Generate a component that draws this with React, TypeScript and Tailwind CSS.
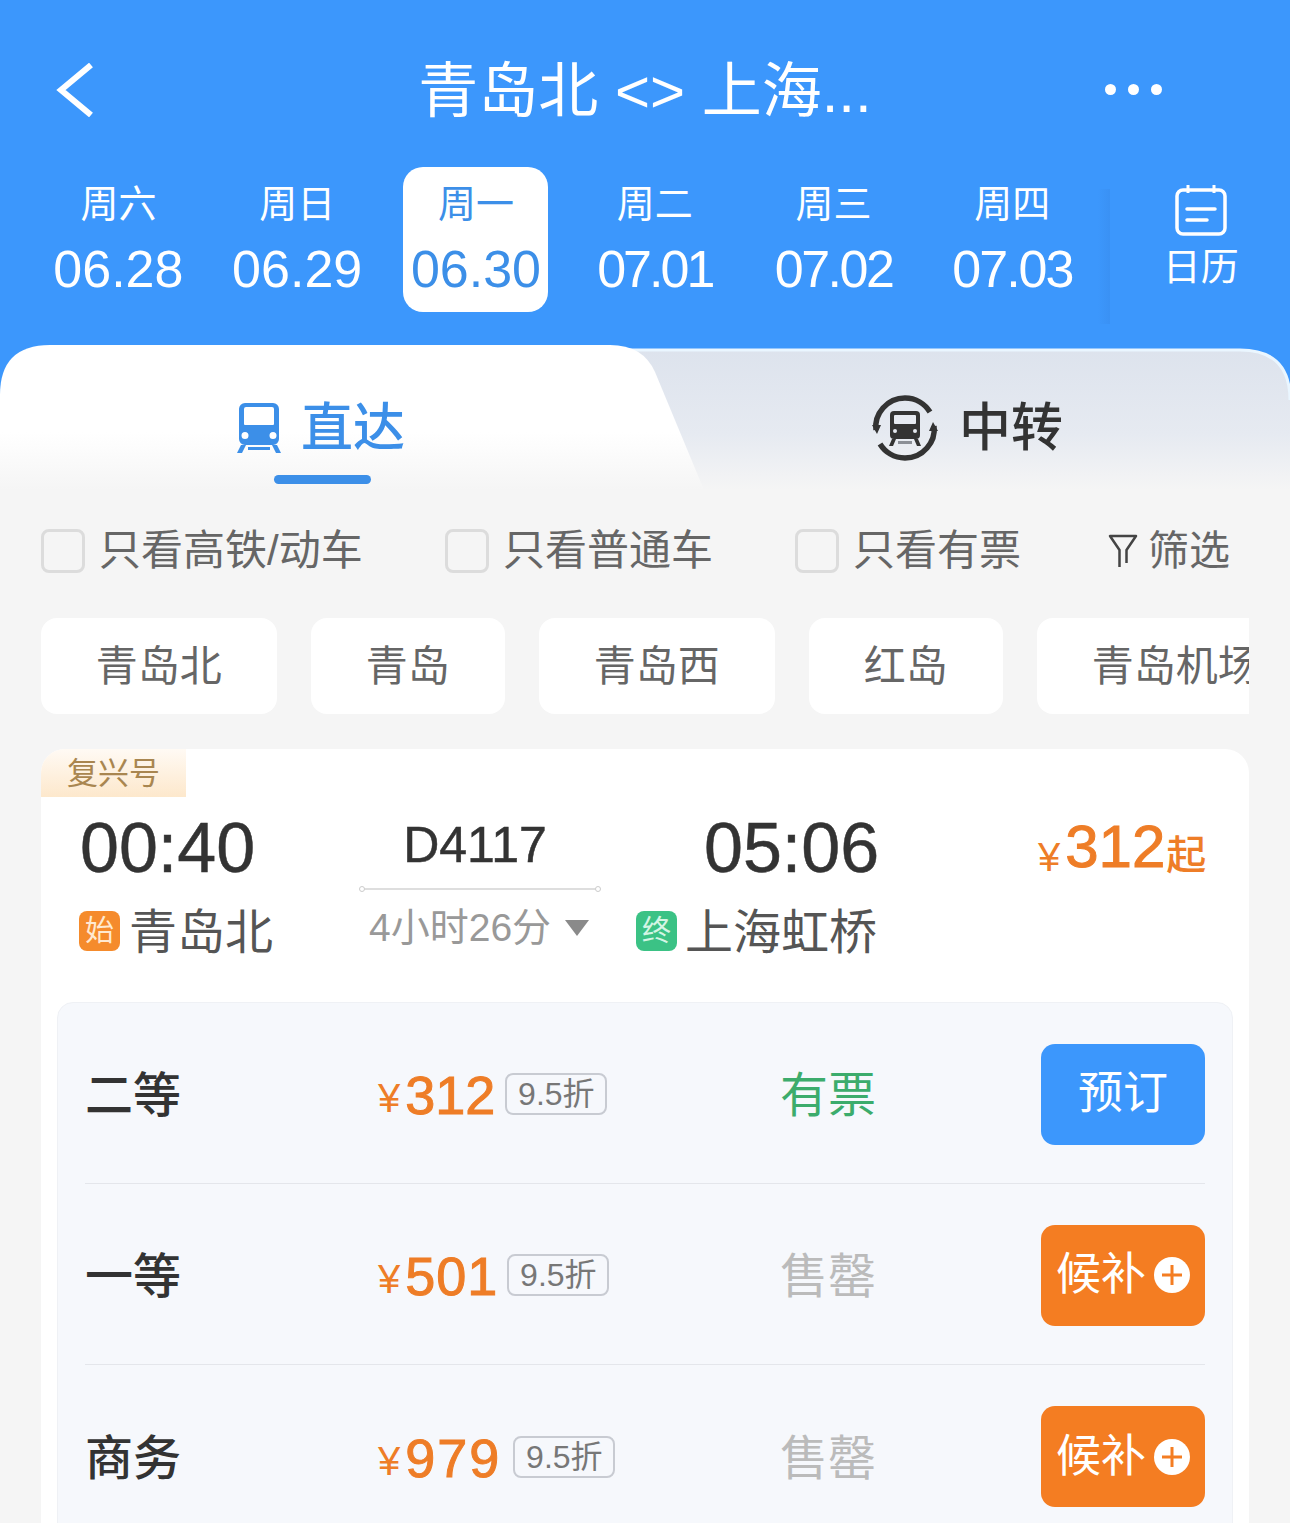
const days = [
  { week: "周六", date: "06.28", track: "" },
  { week: "周日", date: "06.29", track: "" },
  { week: "周一", date: "06.30", track: "", active: true },
  { week: "周二", date: "07.01", track: "tracking-[-3px]" },
  { week: "周三", date: "07.02", track: "tracking-[-2.5px]" },
  { week: "周四", date: "07.03", track: "tracking-[-2px]" },
];

const stations = ["青岛北", "青岛", "青岛西", "红岛", "青岛机场"];

const seats = [
  { name: "二等", price: "312", track: "", tagGap: "ml-[10px]", status: "有票", open: true },
  { name: "一等", price: "501", track: "tracking-[1px]", tagGap: "ml-[9px]", status: "售罄", open: false },
  { name: "商务", price: "979", track: "tracking-[2px]", tagGap: "ml-[12px]", status: "售罄", open: false },
];

function BackIcon() {
  return (
    <svg viewBox="0 0 40 54" className="absolute left-[55px] top-[63px] h-[54px] w-[40px] text-white" fill="none" stroke="currentColor" strokeWidth="6">
      <path d="M36 2 6 27l30 25" />
    </svg>
  );
}

function TrainIcon({ className }: { className?: string }) {
  return (
    <svg viewBox="0 0 46 50" className={className} fill="currentColor">
      <path
        fillRule="evenodd"
        d="M9 0h28a6 6 0 0 1 6 6v30a6 6 0 0 1-6 6H9a6 6 0 0 1-6-6V6a6 6 0 0 1 6-6Zm-1 6v15a1 1 0 0 0 1 1h28a1 1 0 0 0 1-1V6a2 2 0 0 0-2-2H10a2 2 0 0 0-2 2Zm1 23a3.5 3.5 0 1 0 0 7 3.5 3.5 0 0 0 0-7Zm28 0a3.5 3.5 0 1 0 0 7 3.5 3.5 0 0 0 0-7Z"
      />
      <path d="M5 42h5l-4 8H1Zm31 0h5l4 8h-5ZM12 44h22v3H12Z" />
    </svg>
  );
}

function TransferIcon({ className }: { className?: string }) {
  return (
    <svg viewBox="0 0 68 68" className={className} fill="none">
      <path d="M5 36C3 20 16 4 34 4c11 0 20 6 25 14" stroke="currentColor" strokeWidth="5.5" />
      <path d="M63 32c2 16-11 32-29 32-11 0-20-6-25-14" stroke="currentColor" strokeWidth="5.5" />
      <path d="M1 31h9l-4 9ZM67 37h-9l4-9Z" fill="currentColor" />
      <rect x="19" y="17" width="30" height="28" rx="4" fill="currentColor" />
      <rect x="23" y="21" width="22" height="9" rx="1" fill="#e6eaf1" />
      <circle cx="24" cy="37" r="2" fill="#e6eaf1" />
      <circle cx="44" cy="37" r="2" fill="#e6eaf1" />
      <path d="M21 45h4l-3 7h-4ZM43 45h4l3 7h-4Z" fill="currentColor" />
      <rect x="27" y="47" width="14" height="3" fill="#8b8f96" />
    </svg>
  );
}

function CalendarIcon() {
  return (
    <svg viewBox="0 0 52 52" className="h-[52px] w-[52px] text-white" fill="none" stroke="currentColor">
      <rect x="2" y="6" width="48" height="44" rx="6" strokeWidth="3.5" />
      <path d="M13 1v8M39 1v8" strokeWidth="3" />
      <path d="M12 25h28M12 36h20" strokeWidth="3.5" strokeLinecap="round" />
    </svg>
  );
}

function FilterIcon() {
  return (
    <svg viewBox="0 0 30 36" className="h-[36px] w-[30px] text-[#444]" fill="none" stroke="currentColor" strokeWidth="2.5">
      <path d="M11.5 34V17L2 3h26L18.5 17v13" strokeLinejoin="round" />
    </svg>
  );
}

function PlusBadge() {
  return (
    <svg viewBox="0 0 36 36" className="h-[36px] w-[36px]">
      <circle cx="18" cy="18" r="18" fill="#fff" />
      <path d="M18 8v20M8 18h20" stroke="#f47d22" strokeWidth="3" />
    </svg>
  );
}

// back panel of the two tabs: blue corners show around both shapes
function TabShapes() {
  return (
    <svg viewBox="0 0 1290 145" className="absolute inset-0 h-[145px] w-[1290px]">
      <defs>
        <linearGradient id="sideTab" x1="0" y1="0" x2="0" y2="1">
          <stop offset="0" stopColor="#dde3ed" />
          <stop offset="0.6" stopColor="#e6eaf1" />
          <stop offset="1" stopColor="#f5f5f5" />
        </linearGradient>
        <linearGradient id="mainTab" x1="0" y1="0" x2="0" y2="1">
          <stop offset="0" stopColor="#ffffff" />
          <stop offset="0.6" stopColor="#ffffff" />
          <stop offset="1" stopColor="#f5f5f5" />
        </linearGradient>
      </defs>
      <path d="M600 5H1240Q1290 5 1290 55V145H600Z" fill="url(#sideTab)" />
      <path d="M600 5H1240Q1290 5 1290 55" fill="none" stroke="#eaf6ff" strokeWidth="3" />
      <path d="M0 50Q0 0 50 0H610Q643 0 655 27L704 145H0Z" fill="url(#mainTab)" />
    </svg>
  );
}

function Check({ label, width }: { label: string; width: string }) {
  return (
    <div className={`flex items-center gap-[14px] ${width}`}>
      <span className="h-[44px] w-[44px] shrink-0 rounded-lg border-[3px] border-[#dcdcdc]" />
      <span className="whitespace-nowrap text-[42px] leading-none text-[#666]">{label}</span>
    </div>
  );
}

function SeatRow({ seat, last }: { seat: (typeof seats)[number]; last: boolean }) {
  return (
    <div className={`flex h-[181px] items-center pt-[2px] ${last ? "" : "border-b border-[#e4e6eb]"}`}>
      <div className="mt-[4px] w-[293px] text-[48px] font-medium text-[#333]">{seat.name}</div>
      <div className="flex w-[404px] items-center">
        <span className="mt-[8px] text-[40px] leading-none text-[#ee7d27]">¥</span>
        <span className={`mt-[2px] ml-[5px] text-[54px] leading-none text-[#ee7d27] [-webkit-text-stroke:1px_#ee7d27] ${seat.track}`}>{seat.price}</span>
        <span className={`${seat.tagGap} flex h-[42px] w-[102px] items-center justify-center rounded-lg border-2 border-[#c8cbd2] text-[32px] leading-none text-[#777]`}>
          9.5折
        </span>
      </div>
      <div className={`-ml-[2px] mt-[4px] w-[261px] text-[48px] ${seat.open ? "text-[#3cac6c]" : "text-[#bbbbbb]"}`}>{seat.status}</div>
      {seat.open ? (
        <button className="flex h-[101px] w-[164px] items-center justify-center rounded-[14px] bg-[#3c97fc] text-[45px] text-white">
          预订
        </button>
      ) : (
        <button className="flex h-[101px] w-[164px] items-center justify-center gap-[8px] rounded-[14px] bg-[#f47d22] text-[45px] text-white">
          候补
          <PlusBadge />
        </button>
      )}
    </div>
  );
}

export default function App() {
  return (
    <div className="h-[1523px] w-[1290px] overflow-hidden bg-[#f5f5f5] font-['Liberation_Sans','Noto_Sans_CJK_SC',sans-serif]">
      <header className="h-[400px] bg-[#3c97fc] text-white">
        <div className="relative flex h-[167px] items-center justify-center pt-[16px]">
          <BackIcon />
          <h1 className="text-[60px] font-normal leading-none">青岛北 &lt;&gt; 上海...</h1>
          <div className="absolute left-[1105px] top-[84px] flex gap-[12px]">
            <span className="h-[11px] w-[11px] rounded-full bg-white" />
            <span className="h-[11px] w-[11px] rounded-full bg-white" />
            <span className="h-[11px] w-[11px] rounded-full bg-white" />
          </div>
        </div>
        <div className="flex pl-[29px]">
          {days.map((d) => (
            <div key={d.date} className="flex w-[178.8px] justify-center">
              <div
                className={`flex h-[145px] w-[145px] flex-col items-center rounded-[20px] pt-[16px] ${
                  d.active ? "bg-white text-[#3c8fe8]" : ""
                }`}
              >
                <span className="text-[38px] leading-[42px]">{d.week}</span>
                <span className={`mt-[18px] text-[52px] leading-[52px] ${d.track}`}>{d.date}</span>
              </div>
            </div>
          ))}
          <div className="ml-[-4px] mt-[22px] h-[135px] w-[12px] bg-gradient-to-r from-transparent to-[#3a91f4]" />
          <div className="ml-[53px] flex flex-col items-center pt-[17px]">
            <CalendarIcon />
            <span className="mt-[10px] whitespace-nowrap text-[38px] leading-[42px]">日历</span>
          </div>
        </div>
      </header>

      <div className="relative -mt-[55px]">
        <TabShapes />
        <div className="relative flex h-[145px]">
          <div className="relative flex w-[645px] items-center justify-center pt-[20px]">
            <TrainIcon className="ml-[-4px] h-[50px] w-[46px] text-[#3c8fe8]" />
            <span className="ml-[19px] text-[52px] font-medium leading-none text-[#3c8fe8]">直达</span>
            <span className="absolute left-[274px] top-[130px] h-[9px] w-[97px] rounded-full bg-[#3c8fe8]" />
          </div>
          <div className="flex flex-1 items-center pl-[226px] pt-[20px] text-[#333]">
            <TransferIcon className="h-[68px] w-[68px]" />
            <span className="ml-[20px] text-[52px] font-medium leading-none">中转</span>
          </div>
        </div>
      </div>

      <div className="flex h-[128px] items-center pb-[6px] pl-[41px]">
        <Check label="只看高铁/动车" width="w-[404px]" />
        <Check label="只看普通车" width="w-[350px]" />
        <Check label="只看有票" width="w-[313px]" />
        <div className="flex items-center gap-[10px] text-[#666]">
          <FilterIcon />
          <span className="text-[41px] leading-none">筛选</span>
        </div>
      </div>

      <div className="ml-[41px] flex w-[1208px] gap-[34.5px] overflow-hidden">
        {stations.map((s) => (
          <div key={s} className="flex h-[96px] shrink-0 items-center rounded-2xl bg-white px-[54.75px] text-[42px] text-[#666]">
            <span className="whitespace-nowrap">{s}</span>
          </div>
        ))}
      </div>

      <section className="relative ml-[41px] mt-[35px] w-[1208px] rounded-t-3xl bg-white">
        <div className="flex h-[48px] w-[145px] items-center justify-center rounded-tl-3xl bg-gradient-to-b from-[#fffaf4] to-[#fde8cc] text-[31px] leading-none text-[#a98650]">
          复兴号
        </div>

        <div className="flex h-[205px] pl-[38px]">
          <div className="w-[282px]">
            <div className="mt-[14px] pl-[1px] text-[70px] leading-[74px] text-[#333] [-webkit-text-stroke:0.5px_#333]">00:40</div>
            <div className="mt-[21px] flex items-center gap-[9px]">
              <span className="mb-[4px] flex h-[40px] w-[41px] items-center justify-center rounded-lg bg-[#f58b2c] text-[29px] leading-none text-[#ffe9d0]">始</span>
              <span className="text-[48px] leading-[54px] text-[#555]">青岛北</span>
            </div>
          </div>
          <div className="w-[238px]">
            <div className="mt-[20px] pr-[10px] text-center text-[50px] leading-[56px] text-[#333] [-webkit-text-stroke:0.5px_#333]">D4117</div>
            <div className="relative mt-[15px] h-[2px] bg-[#dedede]">
              <span className="absolute -left-[2px] -top-[2px] h-[6px] w-[6px] rounded-full border border-[#ccc] bg-white" />
              <span className="absolute -right-[2px] -top-[2px] h-[6px] w-[6px] rounded-full border border-[#ccc] bg-white" />
            </div>
            <div className="mt-[15px] flex items-center pl-[8px] text-[39px] leading-[46px] text-[#999]">
              4小时26分
              <span className="ml-[14px] h-0 w-0 border-x-[12px] border-t-[16px] border-x-transparent border-t-[#8a8a8a]" />
            </div>
          </div>
          <div className="ml-[37px] w-[242px]">
            <div className="mt-[14px] pl-[68px] text-[70px] leading-[74px] text-[#333] [-webkit-text-stroke:0.5px_#333]">05:06</div>
            <div className="mt-[21px] flex items-center gap-[8px]">
              <span className="mb-[4px] flex h-[40px] w-[41px] items-center justify-center rounded-lg bg-[#3bc285] text-[29px] leading-none text-[#d4f5e4]">终</span>
              <span className="whitespace-nowrap text-[48px] leading-[54px] text-[#555]">上海虹桥</span>
            </div>
          </div>
          <div className="ml-[160px] mt-[18px] flex h-[64px] items-end whitespace-nowrap text-[#ee7d27]">
            <span className="mb-[2px] text-[40px] leading-none">¥</span>
            <span className="ml-[5px] mb-[2px] text-[60px] leading-none [-webkit-text-stroke:1px_#ee7d27]">312</span>
            <span className="mb-[4px] ml-[1px] text-[40px] font-medium leading-none">起</span>
          </div>
        </div>

        <div className="mx-[16px] rounded-t-2xl border border-[#eff1f5] bg-[#f6f8fc] px-[27px]">
          {seats.map((seat, i) => (
            <SeatRow key={seat.name} seat={seat} last={i === seats.length - 1} />
          ))}
        </div>
      </section>
    </div>
  );
}
